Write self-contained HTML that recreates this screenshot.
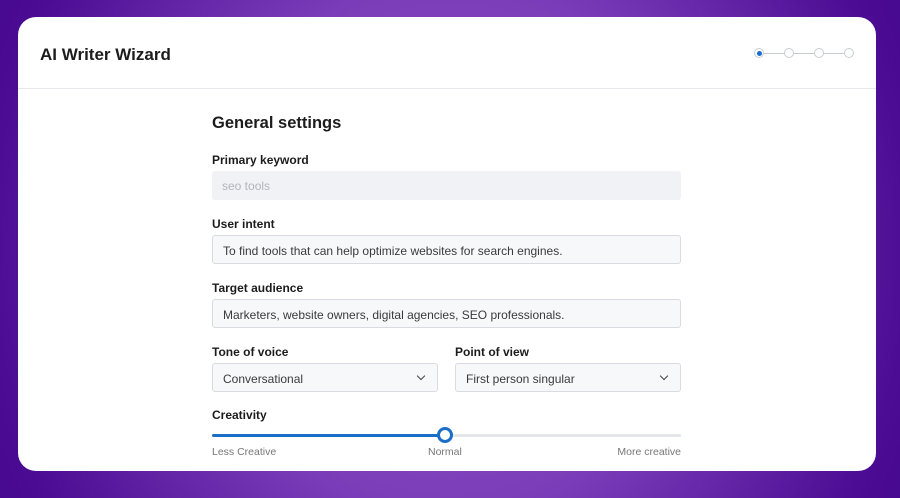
<!DOCTYPE html>
<html><head><style>
*{margin:0;padding:0;box-sizing:border-box}
body{width:900px;height:498px;overflow:hidden;font-family:"Liberation Sans",sans-serif;background:radial-gradient(ellipse 60% 120% at 50% 50%,#9a5cc8 0%,#7a3cb8 45%,#4c0c94 85%,#43078c 100%);position:relative}
.card{position:absolute;left:18px;top:17px;width:858px;height:454px;background:#fff;border-radius:18px;overflow:hidden}
.hd{height:72px;border-bottom:1px solid #e6e8eb;position:relative}
.hd h1{position:absolute;left:22px;top:28px;font-size:17px;font-weight:bold;color:#1c1c1c}
.st{position:absolute;top:31px;width:10px;height:10px;border:1px solid #c7ccd2;border-radius:50%;background:#fff}
.ln{position:absolute;top:36px;height:1px;background:#c7ccd2}
.lab{position:absolute;font-size:12px;font-weight:bold;color:#1c1c1c}
.box{position:absolute;height:29px;border:1px solid #d8dbdf;border-radius:3px;background:#f7f8fa;font-size:12px;color:#3a3a3a;padding:8px 10px}
.chev{position:absolute;right:13px;top:9px;width:6px;height:6px;border-right:1.5px solid #444;border-bottom:1.5px solid #444;transform:rotate(45deg)}
.sm{position:absolute;font-size:10.5px;color:#777;top:429px}
</style></head><body>
<div class="card">
<div class="hd"><h1>AI Writer Wizard</h1>
<div class="st" style="left:736px;border-color:#c7ccd2"></div>
<div style="position:absolute;left:739px;top:34px;width:5px;height:5px;border-radius:50%;background:#1a6ed0"></div>
<div class="ln" style="left:746px;width:20px"></div>
<div class="st" style="left:766px"></div>
<div class="ln" style="left:776px;width:20px"></div>
<div class="st" style="left:796px"></div>
<div class="ln" style="left:806px;width:20px"></div>
<div class="st" style="left:826px"></div>
</div>
<div class="lab" style="left:194px;top:97px;font-size:16.5px">General settings</div>
<div class="lab" style="left:194px;top:136px">Primary keyword</div>
<div class="box" style="left:194px;top:154px;width:469px;border:none;background:#f1f2f5;color:#b0b4ba">seo tools</div>
<div class="lab" style="left:194px;top:200px">User intent</div>
<div class="box" style="left:194px;top:218px;width:469px">To find tools that can help optimize websites for search engines.</div>
<div class="lab" style="left:194px;top:264px">Target audience</div>
<div class="box" style="left:194px;top:282px;width:469px">Marketers, website owners, digital agencies, SEO professionals.</div>
<div class="lab" style="left:194px;top:328px">Tone of voice</div>
<div class="lab" style="left:437px;top:328px">Point of view</div>
<div class="box" style="left:194px;top:346px;width:226px">Conversational<div class="chev"></div></div>
<div class="box" style="left:437px;top:346px;width:226px">First person singular<div class="chev"></div></div>
<div class="lab" style="left:194px;top:391px">Creativity</div>
<div style="position:absolute;left:194px;top:417px;width:469px;height:3px;background:#e4e6e9;border-radius:2px"></div>
<div style="position:absolute;left:194px;top:417px;width:233px;height:3px;background:#1a6ec8;border-radius:2px"></div>
<div style="position:absolute;left:419px;top:410px;width:16px;height:16px;border:3.5px solid #1a6ec8;border-radius:50%;background:#fff"></div>
<div class="sm" style="left:194px">Less Creative</div>
<div class="sm" style="left:410px">Normal</div>
<div class="sm" style="right:195px">More creative</div>
</div>
</body></html>
